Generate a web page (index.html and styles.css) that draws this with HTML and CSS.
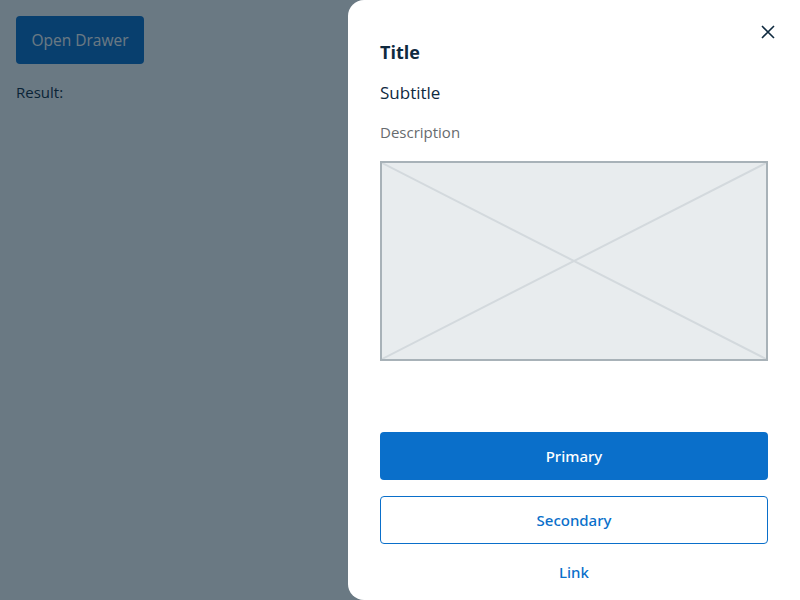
FILE: index.html
```html
<!DOCTYPE html>
<html>
<head>
<meta charset="utf-8">
<link rel="stylesheet" href="styles.css">
</head>
<body>
<main class="page">
  <button class="open-btn">Open Drawer</button>
  <p class="result">Result:</p>
</main>
<div class="overlay"></div>
<aside class="drawer">
  <button class="close" aria-label="Close">
    <svg width="14" height="14" viewBox="0 0 14 14"><path d="M1 1L13 13M13 1L1 13" stroke="#0f2a3f" stroke-width="1.6" fill="none"/></svg>
  </button>
  <div class="drawer-body">
    <h2 class="title">Title</h2>
    <h3 class="subtitle">Subtitle</h3>
    <p class="desc">Description</p>
    <div class="placeholder">
      <svg class="ph-lines" viewBox="0 0 100 100" preserveAspectRatio="none"><path d="M0 0L100 100M100 0L0 100" stroke="#d3d9dd" stroke-width="2" vector-effect="non-scaling-stroke" fill="none"/></svg>
    </div>
  </div>
  <div class="actions">
    <button class="btn primary">Primary</button>
    <button class="btn secondary">Secondary</button>
    <button class="btn link">Link</button>
  </div>
</aside>
</body>
</html>
```
FILE: styles.css
```css
* { box-sizing: border-box; }
html, body { margin: 0; height: 100%; }
body {
  font-family: "Open Sans", "Noto Sans", sans-serif;
  color: #0f2a3f;
  background: #fff;
}
.page { padding: 16px; }
.open-btn {
  font: inherit;
  font-size: 15.5px;
  background: #0b6ecb;
  color: #fff;
  border: none;
  border-radius: 4px;
  height: 48px;
  width: 128px;
  padding: 0;
}
.result { margin: 18px 0 0; font-size: 15px; }
.overlay {
  position: fixed; inset: 0;
  background: rgba(7, 32, 49, 0.6);
}
.drawer {
  position: fixed;
  top: 0; bottom: 0; right: 0;
  width: 452px;
  background: #fff;
  border-radius: 16px 0 0 16px;
  padding: 32px 32px 16px;
  display: flex;
  flex-direction: column;
}
.close {
  position: absolute;
  top: 25px; right: 25px;
  background: none; border: none; padding: 0;
  width: 14px; height: 14px;
  display: flex;
}
.drawer-body { flex: 1; }
.title { margin: 8px 0 0; font-size: 18px; font-weight: 700; line-height: 24px; }
.subtitle { margin: 17px 0 0; font-size: 17px; font-weight: 400; line-height: 24px; }
.desc { margin: 17px 0 0; font-size: 15px; line-height: 20px; color: #676b6e; }
.placeholder {
  margin-top: 19px;
  height: 200px;
  border: 2px solid #a8b2b8;
  background: #e8ecee;
  position: relative;
}
.ph-lines { position: absolute; inset: 0; width: 100%; height: 100%; }
.actions { display: flex; flex-direction: column; gap: 16px; }
.btn {
  font-family: "Noto Sans", "Open Sans", sans-serif;
  font-size: 15px;
  font-weight: 500;
  height: 48px;
  border-radius: 4px;
  width: 100%;
  padding: 0;
}
.primary { background: #0a6fca; color: #fff; border: none; }
.secondary { background: #fff; color: #0a6fca; border: 1px solid #0a6fca; }
.link { background: none; border: none; color: #0a6fca; height: 24px; }
```
